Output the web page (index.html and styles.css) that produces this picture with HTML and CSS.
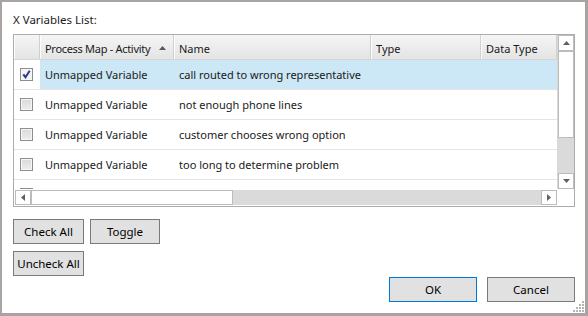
FILE: index.html
```html
<!DOCTYPE html>
<html lang="en">

<head>
    <meta charset="UTF-8">
    <title>X Variables List</title>
    <link rel="stylesheet" href="styles.css">
</head>

<body>
    <div class="window">
        <div class="caption">X Variables List:</div>

        <div class="grid">
            <div class="viewport">
                <div class="row head">
                    <div class="cell check-col"></div>
                    <div class="cell sorted">
                        <span>Process Map - Activity</span>
                        <svg width="7" height="4" viewBox="0 0 7 4"><path d="M0 4 L3.5 0 L7 4 Z" fill="#5a5a5a"/></svg>
                    </div>
                    <div class="cell">Name</div>
                    <div class="cell">Type</div>
                    <div class="cell">Data Type</div>
                </div>

                <div class="row selected">
                    <div class="cell check-col">
                        <span class="checkbox">
                            <svg width="11" height="11" viewBox="0 0 11 11"><path d="M2.3 5.3 L4.5 8.2 L8.7 1.8" fill="none" stroke="#2c3a8c" stroke-width="2"/></svg>
                        </span>
                    </div>
                    <div class="cell">Unmapped Variable</div>
                    <div class="cell">call routed to wrong representative</div>
                    <div class="cell"></div>
                    <div class="cell"></div>
                </div>
                <div class="row">
                    <div class="cell check-col"><span class="checkbox"></span></div>
                    <div class="cell">Unmapped Variable</div>
                    <div class="cell">not enough phone lines</div>
                    <div class="cell"></div>
                    <div class="cell"></div>
                </div>
                <div class="row">
                    <div class="cell check-col"><span class="checkbox"></span></div>
                    <div class="cell">Unmapped Variable</div>
                    <div class="cell">customer chooses wrong option</div>
                    <div class="cell"></div>
                    <div class="cell"></div>
                </div>
                <div class="row">
                    <div class="cell check-col"><span class="checkbox"></span></div>
                    <div class="cell">Unmapped Variable</div>
                    <div class="cell">too long to determine problem</div>
                    <div class="cell"></div>
                    <div class="cell"></div>
                </div>
                <div class="row">
                    <div class="cell check-col"><span class="checkbox"></span></div>
                    <div class="cell"></div>
                    <div class="cell"></div>
                    <div class="cell"></div>
                    <div class="cell"></div>
                </div>
            </div>

            <div class="vscroll">
                <div class="arrow">
                    <svg width="7" height="4" viewBox="0 0 7 4"><path d="M0 4 L3.5 0 L7 4 Z" fill="#606060"/></svg>
                </div>
                <div class="thumb"></div>
                <div class="track"></div>
                <div class="arrow">
                    <svg width="7" height="4" viewBox="0 0 7 4"><path d="M0 0 L3.5 4 L7 0 Z" fill="#606060"/></svg>
                </div>
            </div>

            <div class="hscroll">
                <div class="arrow">
                    <svg width="4" height="7" viewBox="0 0 4 7"><path d="M4 0 L0 3.5 L4 7 Z" fill="#606060"/></svg>
                </div>
                <div class="thumb"></div>
                <div class="track"></div>
                <div class="arrow">
                    <svg width="4" height="7" viewBox="0 0 4 7"><path d="M0 0 L4 3.5 L0 7 Z" fill="#606060"/></svg>
                </div>
            </div>

            <div class="corner"></div>
        </div>

        <div class="footer">
            <div class="select-buttons">
                <div class="btn-row">
                    <button>Check All</button>
                    <button class="toggle">Toggle</button>
                </div>
                <button>Uncheck All</button>
            </div>
            <div class="dialog-buttons">
                <button class="wide default">OK</button>
                <button class="wide">Cancel</button>
            </div>
        </div>

        <svg class="grip" width="12" height="12" viewBox="0 0 12 12" fill="#b4b4b4">
            <rect x="9" y="0" width="2" height="2"/>
            <rect x="6" y="3" width="2" height="2"/><rect x="9" y="3" width="2" height="2"/>
            <rect x="3" y="6" width="2" height="2"/><rect x="6" y="6" width="2" height="2"/><rect x="9" y="6" width="2" height="2"/>
            <rect x="0" y="9" width="2" height="2"/><rect x="3" y="9" width="2" height="2"/><rect x="6" y="9" width="2" height="2"/><rect x="9" y="9" width="2" height="2"/>
        </svg>
    </div>
</body>

</html>
```

FILE: styles.css
```css
body {
    margin: 0;
    padding: 0;
    font-family: 'Noto Sans', 'Open Sans', sans-serif;
    font-size: 11px;
    color: #1a1a1a;
    background-color: #fff;
}

.window {
    position: relative;
    width: 588px;
    height: 316px;
    box-sizing: border-box;
    display: flex;
    flex-direction: column;
    padding: 10px 10px 11px 11px;
    border-style: solid;
    border-color: #a9a3a3;
    border-width: 2px 3px 3px 2px;
    background-color: #fff;
}

.caption {
    font-size: 11.5px;
    line-height: 16px;
    margin-bottom: 6px;
}

/* data grid */
.grid {
    display: grid;
    grid-template-columns: 543px 17px;
    grid-template-rows: 154px 17px;
    border: 1px solid #acacac;
}

.viewport {
    overflow: hidden;
}

.row {
    display: grid;
    grid-template-columns: 26px 134px 197px 110px 76px;
    height: 30px;
    box-sizing: border-box;
    border-bottom: 1px solid #e4e4e4;
}

.cell {
    display: flex;
    align-items: center;
    padding-left: 5px;
    white-space: nowrap;
    overflow: hidden;
}

.check-col {
    padding-left: 6px;
}

.head {
    height: 25px;
    border-bottom: 1px solid #d6d6d6;
    background: linear-gradient(#f5f5f5, #e4e4e4);
}

.head .cell {
    padding-top: 2px;
    border-right: 1px solid #d0d0d0;
    box-shadow: inset 1px 0 #fdfdfd;
}

.head .sorted span {
    letter-spacing: -0.3px;
}

.head .sorted svg {
    margin-left: auto;
    margin-right: 7px;
}

.selected .cell:not(.check-col) {
    background-color: #cce7f5;
}

.checkbox {
    width: 13px;
    height: 13px;
    box-sizing: border-box;
    display: flex;
    align-items: center;
    justify-content: center;
    border: 1px solid #8e8e8e;
    background: linear-gradient(#d9d9d9, #ededed);
    box-shadow: inset 0 0 0 1px #f6f6f6;
}

.selected .checkbox {
    background: #f4f4f4;
}

/* scroll bars */
.vscroll {
    display: flex;
    flex-direction: column;
    border-left: 1px solid #d8d8d8;
    background-color: #fff;
}

.hscroll {
    display: flex;
    padding: 1px 0 1px 1px;
    background-color: #fff;
}

.arrow {
    display: flex;
    align-items: center;
    justify-content: center;
    box-sizing: border-box;
    border: 1px solid #bcbcbc;
    background-color: #fff;
}

.vscroll .arrow {
    height: 16px;
}

.hscroll .arrow {
    width: 16px;
}

.thumb {
    box-sizing: border-box;
    border: 1px solid #bcbcbc;
    background-color: #fff;
}

.vscroll .thumb {
    height: 87px;
}

.hscroll .thumb {
    width: 202px;
}

.track {
    flex: 1;
    background-color: #dadada;
}

.corner {
    background-color: #fff;
}

/* buttons */
.footer {
    flex: 1;
    display: flex;
    justify-content: space-between;
    margin-top: 12px;
}

.select-buttons {
    display: flex;
    flex-direction: column;
    align-items: flex-start;
    gap: 7px;
}

.btn-row {
    display: flex;
    gap: 6px;
}

.dialog-buttons {
    align-self: flex-end;
    display: flex;
    gap: 10px;
}

button {
    width: 71px;
    height: 25px;
    padding: 0;
    font-family: inherit;
    font-size: 11.5px;
    color: #000;
    background-color: #e1e1e1;
    border: 1px solid #7a7a7a;
    border-radius: 0;
}

button.toggle {
    width: 70px;
}

button.wide {
    width: 88px;
}

button.default {
    border-color: #0078d7;
}

.grip {
    position: absolute;
    right: 0;
    bottom: 0;
}
```
